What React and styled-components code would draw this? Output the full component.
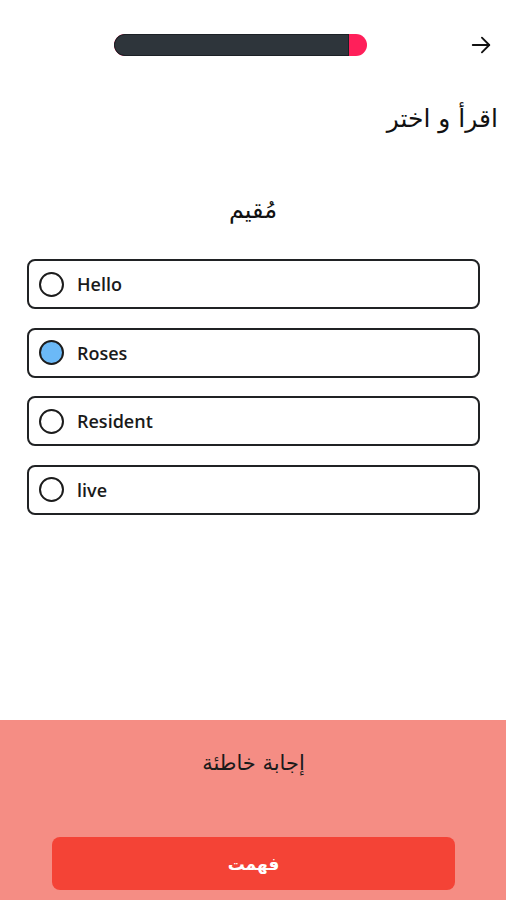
import React from "react";
import styled, { createGlobalStyle } from "styled-components";

const Global = createGlobalStyle`
  html, body { margin: 0; padding: 0; background: #ffffff; }
  body { font-family: "DejaVu Sans", sans-serif; }
`;

const Page = styled.div`
  display: flex;
  flex-direction: column;
  height: 900px;
  width: 506px;
  overflow: hidden;
`;

const Header = styled.div`
  display: flex;
  align-items: center;
  padding: 34px 14px 0 114px;
`;

const Track = styled.div`
  width: 253px;
  height: 22px;
  border-radius: 11px;
  background: #ff1f5a;
  overflow: hidden;
  display: flex;
`;

const Fill = styled.div`
  height: 100%;
  background: #2e353b;
  box-shadow: inset 0 0 0 1px #1c2126;
  border-radius: 11px 0 0 11px;
`;

const Back = styled.button`
  margin-left: auto;
  background: none;
  border: 0;
  padding: 0;
  width: 22px;
  height: 22px;
  display: flex;
  align-items: center;
  justify-content: center;
`;

const Title = styled.h1`
  margin: 46px 0 0;
  padding-right: 8px;
  text-align: right;
  direction: rtl;
  font-family: "DejaVu Sans", sans-serif;
  font-weight: 400;
  font-size: 25px;
  line-height: 34px;
  color: #111;
`;

const Word = styled.div`
  margin-top: 57px;
  text-align: center;
  direction: rtl;
  font-family: "DejaVu Sans", sans-serif;
  font-size: 24px;
  line-height: 34px;
  color: #111;
`;

const Options = styled.div`
  display: flex;
  flex-direction: column;
  gap: 18.67px;
  margin: 32px 26px 0 27px;
`;

const Option = styled.label`
  display: flex;
  align-items: center;
  gap: 13px;
  height: 50px;
  box-sizing: border-box;
  padding: 0 10px;
  border: 2px solid #202224;
  border-radius: 8px;
  background: #fff;
`;

const Radio = styled.span`
  width: 25px;
  height: 25px;
  box-sizing: border-box;
  border-radius: 50%;
  border: 2px solid #1c1c1c;
  background: ${(p) => (p.$checked ? "#6bb9f7" : "#fff")};
  flex: none;
`;

const OptionText = styled.span`
  font-family: "Open Sans", "Roboto", sans-serif;
  font-weight: 600;
  font-size: 18px;
  color: #1a1a1a;
`;

const Spacer = styled.div`
  flex: 1;
`;

const Feedback = styled.div`
  height: 180px;
  background: #f58d84;
  display: flex;
  flex-direction: column;
  align-items: center;
  box-sizing: border-box;
  padding: 27px 51px 10px 52px;
`;

const FeedbackText = styled.div`
  direction: rtl;
  font-family: "DejaVu Sans", sans-serif;
  font-size: 21px;
  line-height: 32px;
  color: #1a1a1a;
`;

const GotIt = styled.button`
  margin-top: auto;
  width: 100%;
  height: 53px;
  border: 0;
  border-radius: 8px;
  background: #f44336;
  color: #fff;
  direction: rtl;
  font-family: "DejaVu Sans", sans-serif;
  font-weight: 700;
  font-size: 17px;
`;

const options = [
  { label: "Hello", checked: false },
  { label: "Roses", checked: true },
  { label: "Resident", checked: false },
  { label: "live", checked: false },
];

export default function App() {
  return (
    <>
      <Global />
      <Page>
        <Header>
          <Track>
            <Fill style={{ width: "93%" }} />
          </Track>
          <Back aria-label="back">
            <svg width="22" height="22" viewBox="0 0 24 24" fill="none" stroke="#111" strokeWidth="2" strokeLinecap="round" strokeLinejoin="round">
              <path d="M3 12h18" />
              <path d="M13 4l8 8-8 8" />
            </svg>
          </Back>
        </Header>
        <Title>اقرأ و اختر</Title>
        <Word>مُقيم</Word>
        <Options>
          {options.map((o) => (
            <Option key={o.label}>
              <Radio $checked={o.checked} />
              <OptionText>{o.label}</OptionText>
            </Option>
          ))}
        </Options>
        <Spacer />
        <Feedback>
          <FeedbackText>إجابة خاطئة</FeedbackText>
          <GotIt>فهمت</GotIt>
        </Feedback>
      </Page>
    </>
  );
}
